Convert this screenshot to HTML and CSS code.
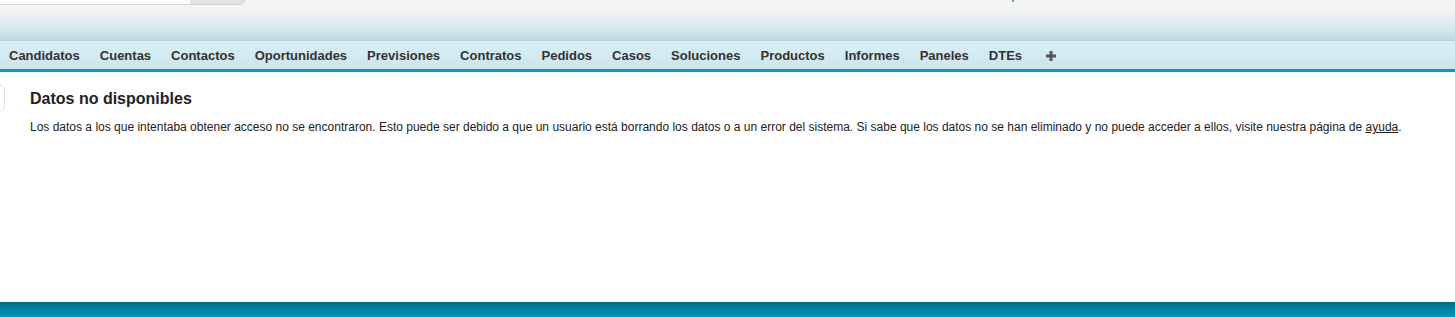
FILE: index.html
```html
<!DOCTYPE html>
<html lang="es">
<head>
<meta charset="utf-8">
<title>Datos no disponibles</title>
<link rel="stylesheet" href="styles.css">
</head>
<body>
<div class="page">
  <header class="header">
    <div class="search">
      <div class="search-input"></div>
      <div class="search-btn"></div>
    </div>
    <div class="header-link"></div>
  </header>
  <nav class="tabbar">
    <ul class="tabs">
      <li class="tab">Candidatos</li>
      <li class="tab">Cuentas</li>
      <li class="tab">Contactos</li>
      <li class="tab">Oportunidades</li>
      <li class="tab">Previsiones</li>
      <li class="tab">Contratos</li>
      <li class="tab">Pedidos</li>
      <li class="tab">Casos</li>
      <li class="tab">Soluciones</li>
      <li class="tab">Productos</li>
      <li class="tab">Informes</li>
      <li class="tab">Paneles</li>
      <li class="tab">DTEs</li>
      <li class="tab tab-plus">
        <svg width="10" height="10" viewBox="0 0 10 10"><path d="M3.5 0h3v3.5H10v3H6.5V10h-3V6.5H0v-3h3.5z" fill="#555"/></svg>
      </li>
    </ul>
  </nav>
  <main class="main">
    <div class="edge"></div>
    <div class="content">
      <h1 class="title">Datos no disponibles</h1>
      <p class="msg">Los datos a los que intentaba obtener acceso no se encontraron. Esto puede ser debido a que un usuario está borrando los datos o a un error del sistema. Si sabe que los datos no se han eliminado y no puede acceder a ellos, visite nuestra página de <a class="link" href="#">ayuda</a>.</p>
    </div>
  </main>
  <footer class="footer"></footer>
</div>
</body>
</html>
```
FILE: styles.css
```css
html, body {
  margin: 0;
  padding: 0;
  background: #fff;
}
.page {
  height: 317px;
  display: flex;
  flex-direction: column;
  font-family: "Liberation Sans", Arial, sans-serif;
  overflow: hidden;
}
.header {
  height: 40px;
  flex: none;
  display: flex;
  align-items: flex-start;
  background: linear-gradient(to bottom, #f5f5f5 0px, #f3f4f4 10px, #d3e6eb 30px, #bcd9e1 40px);
  border-bottom: 1px solid #b5d2db;
}
.search {
  display: flex;
}
.search-input {
  width: 190px;
  height: 4px;
  background: #fff;
  border-bottom: 1px solid #d6d6d6;
}
.search-btn {
  width: 54px;
  height: 4px;
  background: #e3e3e3;
  border-bottom: 1px solid #d2d2d2;
  border-right: 1px solid #d2d2d2;
  border-bottom-right-radius: 6px;
}
.header-link {
  margin-left: 767px;
  width: 2px;
  height: 2px;
  background: #3db7de;
}
.tabbar {
  flex: none;
  height: 28px;
  background: linear-gradient(to bottom, #ddeef3, #c9e6ee);
  border-bottom: 3px solid #0f97bf;
}
.tabs {
  list-style: none;
  margin: 0 0 0 -1px;
  padding: 0;
  display: flex;
  height: 100%;
  align-items: center;
}
.tab {
  padding: 1px 10px 0;
  font-size: 13px;
  font-weight: bold;
  color: #333;
  line-height: 28px;
}
.tab-plus {
  display: flex;
  align-items: center;
  padding-left: 14px;
}
.main {
  flex: 1;
  display: flex;
  align-items: flex-start;
  padding-top: 13px;
}
.edge {
  width: 30px;
  height: 24px;
  margin-left: -27px;
  border: 1px solid #e0e0e0;
  border-radius: 5px;
  flex: none;
}
.content {
  margin-left: 25px;
}
.title {
  margin: 4px 0 0;
  font-size: 16px;
  font-weight: bold;
  color: #222;
  line-height: 19px;
}
.msg {
  margin: 12px 0 0;
  font-size: 12px;
  color: #222;
  line-height: 15px;
}
.link {
  color: #222;
  text-decoration: underline;
}
.footer {
  flex: none;
  height: 15px;
  background: linear-gradient(to bottom, #006e8b, #0097bc);
}
```
